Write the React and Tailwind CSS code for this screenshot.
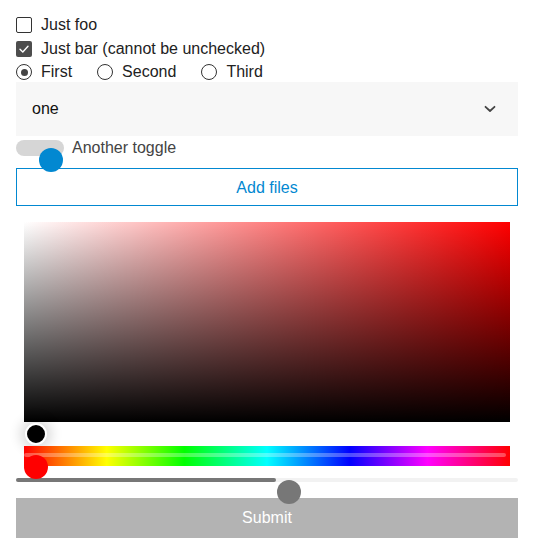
import React from "react";

export default function App() {
  return (
    <div className="w-[534px] h-[560px] bg-white px-4 pt-[13px] text-[16px] text-[#222]" style={{ fontFamily: '"Liberation Sans", Arial, sans-serif' }}>
      {/* checkbox 1 */}
      <div className="flex h-6 items-center">
        <span className="box-border h-4 w-4 rounded-[2px] border-[1.5px] border-[#333]" />
        <span className="ml-[9px]">Just foo</span>
      </div>
      {/* checkbox 2 */}
      <div className="flex h-6 items-center">
        <span className="flex h-4 w-4 items-center justify-center rounded-[2px] bg-[#4d4d4d]">
          <svg width="12" height="12" viewBox="0 0 12 12" fill="none">
            <path d="M2 6.2 L4.8 9 L10 3.2" stroke="#fff" strokeWidth="1.4" strokeLinecap="round" strokeLinejoin="round" />
          </svg>
        </span>
        <span className="ml-[9px]">Just bar (cannot be unchecked)</span>
      </div>
      {/* radios */}
      <div className="flex h-[22px] items-center gap-[25px]">
        <div className="flex items-center">
          <span className="box-border flex h-4 w-4 items-center justify-center rounded-full border-[1.5px] border-[#333]">
            <span className="h-[7px] w-[7px] rounded-full bg-[#444]" />
          </span>
          <span className="ml-[9px]">First</span>
        </div>
        <div className="flex items-center">
          <span className="box-border h-4 w-4 rounded-full border-[1.5px] border-[#333]" />
          <span className="ml-[9px]">Second</span>
        </div>
        <div className="flex items-center">
          <span className="box-border h-4 w-4 rounded-full border-[1.5px] border-[#333]" />
          <span className="ml-[9px]">Third</span>
        </div>
      </div>
      {/* select */}
      <div className="-mt-px flex h-[54px] items-center justify-between bg-[#f7f7f7] pl-4 pr-[22px]">
        <span className="text-[#111]">one</span>
        <svg width="12" height="8" viewBox="0 0 12 8" fill="none">
          <path d="M1.5 1.8 L6 6 L10.5 1.8" stroke="#444" strokeWidth="1.8" strokeLinecap="round" strokeLinejoin="round" />
        </svg>
      </div>
      {/* toggle */}
      <div className="mt-[4px] flex h-4 items-center">
        <div className="relative h-4 w-12 rounded-full bg-[#d6d6d6]">
          <span className="absolute left-[23px] top-[8px] z-10 h-6 w-6 rounded-full bg-[#0288d1]" />
        </div>
        <span className="ml-2 text-[#444]">Another toggle</span>
      </div>
      {/* add files */}
      <div className="mt-3 flex h-[38px] items-center justify-center border border-[#0288d1] pt-px text-[#0288d1]">
        Add files
      </div>
      {/* color picker */}
      <div className="mx-2 mt-4">
        <div className="relative h-[200px] bg-[linear-gradient(to_right,#ffffff,#ff0000)]">
          <div className="h-full w-full bg-[linear-gradient(to_top,#000000,rgba(0,0,0,0))]" />
          <span className="absolute left-[1px] top-[201px] box-border h-[22px] w-[22px] rounded-full border-2 border-white bg-black shadow-[0_0_12px_5px_rgba(0,0,0,0.14)]" />
        </div>
        <div className="relative mt-6 h-5 bg-[linear-gradient(to_right,#ff0000_0%,#ffff00_17%,#00ff00_33%,#00ffff_50%,#0000ff_67%,#ff00ff_83%,#ff0000_100%)]">
          <div className="absolute left-0 right-[4px] top-[7px] h-1 rounded-full bg-white/30" />
          <span className="absolute left-0 top-[9px] z-10 h-6 w-6 rounded-full bg-[#ff0000]" />
        </div>
      </div>
      {/* slider */}
      <div className="relative mt-3 h-1 rounded-full bg-[#f2f2f2]">
        <div className="h-1 w-[260px] rounded-full bg-[#777]" />
        <span className="absolute left-[261px] top-[2px] z-10 h-6 w-6 rounded-full bg-[#777]" />
      </div>
      {/* submit */}
      <div className="mt-4 flex h-10 items-center justify-center bg-[#b3b3b3] text-white">
        Submit
      </div>
    </div>
  );
}
